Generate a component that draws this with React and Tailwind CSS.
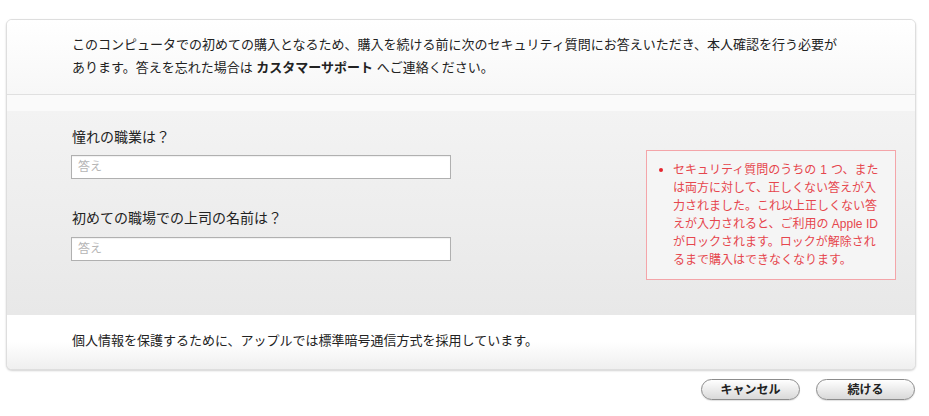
export default function App() {
  return (
    <div className="w-[929px] h-[416px] bg-white font-['Liberation_Sans','Noto_Sans_CJK_JP',sans-serif] text-[#333]">
      <div className="pt-[19px] pl-[6px]">
        <div className="w-[910px] border border-[#dedede] rounded-[6px] overflow-hidden shadow-[0_1px_2px_rgba(0,0,0,0.18)] bg-white">
          <div className="h-[74px] bg-gradient-to-b from-white to-[#f7f7f7] pl-[65px] pt-[13px] text-[13px] leading-[23px] text-[#222]">
            このコンピュータでの初めての購入となるため、購入を続ける前に次のセキュリティ質問にお答えいただき、本人確認を行う必要が
            <br />
            あります。答えを忘れた場合は <span className="font-bold">カスタマーサポート</span> へご連絡ください。
          </div>
          <div className="h-px bg-[#e0e0e0]" />
          <div className="h-[16px] bg-[#fafafa]" />
          <div className="h-[204px] bg-gradient-to-b from-[#f3f3f3] to-[#e8e8e8] flex">
            <div className="pl-[64px] pt-[16px] flex flex-col">
              <div className="text-[14px] leading-[20px] pl-[1px] text-[#222]">憧れの職業は？</div>
              <div className="mt-[8px] w-[380px] h-[24px] bg-white border border-[#b0b0b0] shadow-[inset_0_1px_1px_rgba(0,0,0,0.06)] flex items-center pl-[6px] text-[12px] text-[#b5b5b5]">
                答え
              </div>
              <div className="mt-[29px] text-[14px] leading-[20px] pl-[1px] text-[#222]">初めての職場での上司の名前は？</div>
              <div className="mt-[9px] w-[380px] h-[24px] bg-white border border-[#b0b0b0] shadow-[inset_0_1px_1px_rgba(0,0,0,0.06)] flex items-center pl-[6px] text-[12px] text-[#b5b5b5]">
                答え
              </div>
            </div>
            <div className="ml-auto mr-[19px] mt-[39px] w-[250px] h-[130px] border border-[#f4a5a9] bg-[#f5f5f5] pl-[12px] pt-[10px] flex items-start text-[12px] leading-[18px] text-[#e6464d]">
              <span className="mt-[7px] w-[4px] h-[4px] rounded-full bg-[#e5262f] shrink-0" />
              <div className="ml-[10px] whitespace-nowrap">
                セキュリティ質問のうちの<span className="mx-[4px]">1</span>つ、また
                <br />
                は両方に対して、正しくない答えが入
                <br />
                力されました。これ以上正しくない答
                <br />
                えが入力されると、ご利用の Apple ID
                <br />
                がロックされます。ロックが解除され
                <br />
                るまで購入はできなくなります。
              </div>
            </div>
          </div>
          <div className="h-[54px] bg-gradient-to-b from-white via-white to-[#efefef] pl-[65px] pt-[14px] text-[13px] leading-[23px] text-[#222]">
            個人情報を保護するために、アップルでは標準暗号通信方式を採用しています。
          </div>
        </div>
      </div>
      <div className="flex justify-end gap-[16px] pr-[14px] mt-[9px]">
        <button className="w-[99px] h-[21px] rounded-full border border-[#8c8c8c] bg-gradient-to-b from-white to-[#d9d9d9] text-[12px] font-bold text-[#222] leading-none flex items-center justify-center shadow-[0_1px_1px_rgba(0,0,0,0.12)]">
          キャンセル
        </button>
        <button className="w-[99px] h-[21px] rounded-full border border-[#8c8c8c] bg-gradient-to-b from-white to-[#d9d9d9] text-[12px] font-bold text-[#222] leading-none flex items-center justify-center shadow-[0_1px_1px_rgba(0,0,0,0.12)]">
          続ける
        </button>
      </div>
    </div>
  );
}
